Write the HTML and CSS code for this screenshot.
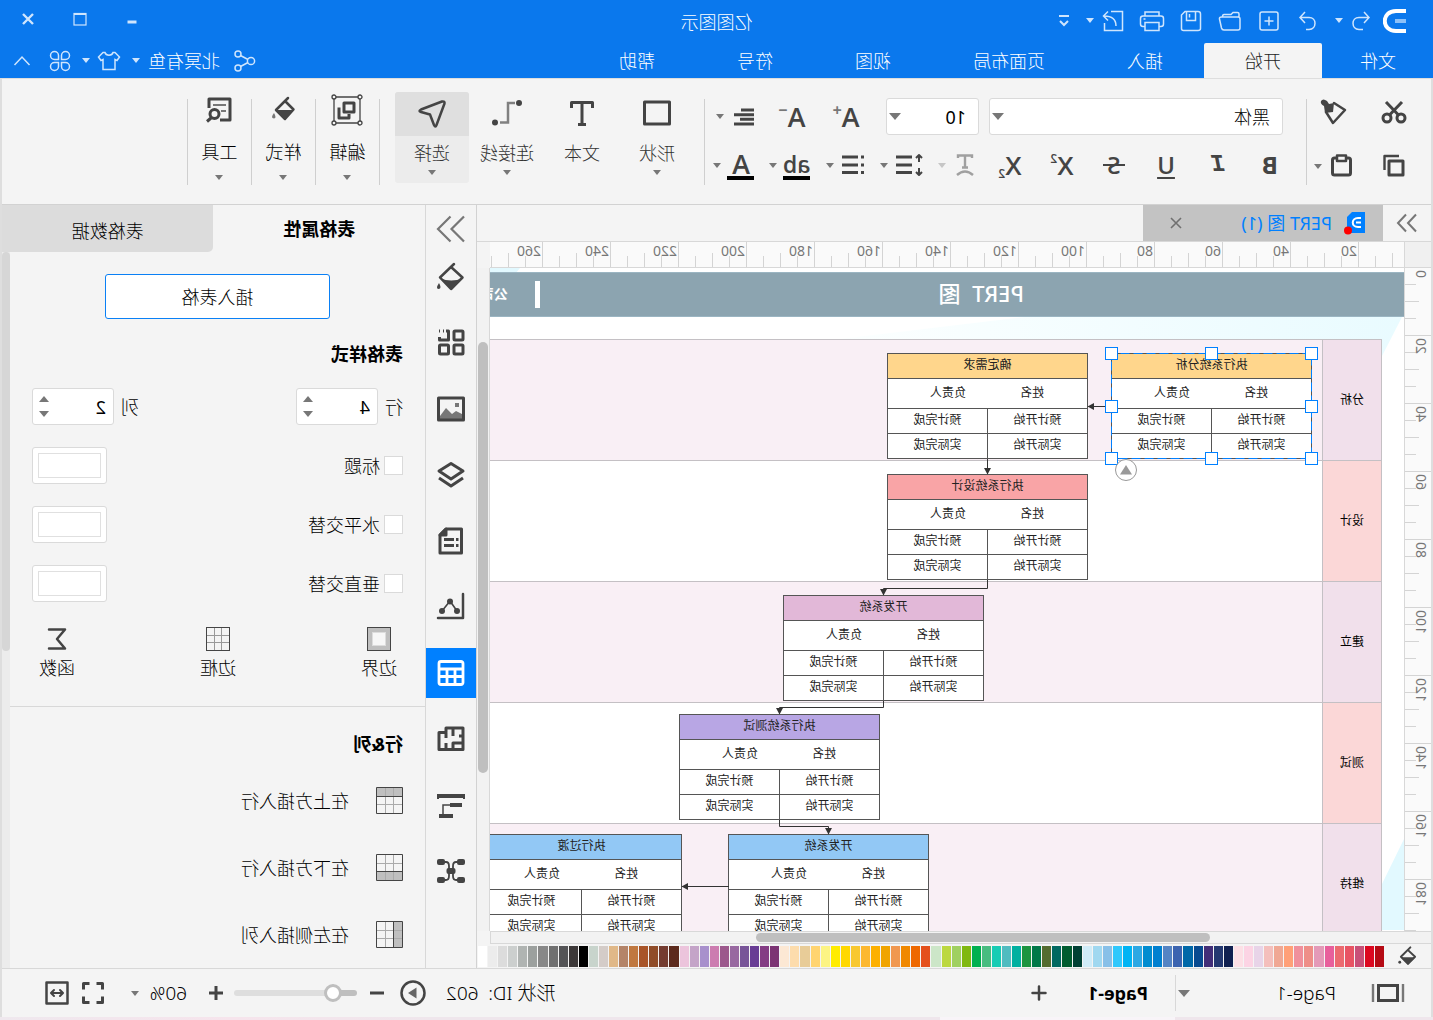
FILE: index.html
```html
<!DOCTYPE html>
<html lang="zh-CN">
<head>
<meta charset="utf-8">
<title>亿图图示</title>
<link rel="stylesheet" href="styles.css">
</head>
<body>
<div class="app">
  <header class="top">
    <div class="titlebar">
      <svg class="logo" width="24" height="26" viewBox="0 0 24 26" fill="none"><path d="M1 3H11C26 3 26 23 11 23H1" stroke="#fff" stroke-width="4"/><path d="M1 13H12" stroke="#8dc1f8" stroke-width="4"/></svg>
      <div class="quick">
        <button class="q q-undo" aria-label="撤销"><svg width="20" height="22" viewBox="0 0 20 22"><path d="M7 2 2 7.500 7 13M2 7.500H12C20 7.500 20 19 12 19.500H8"/></svg></button>
        <i class="caret light"></i>
        <button class="q q-redo" aria-label="重做"><svg width="20" height="22" viewBox="0 0 20 22"><path d="M13 2 18 7.500 13 13M18 7.500H9C1 7.500 1 19 9 19.500H12"/></svg></button>
        <button class="q" aria-label="新建"><svg width="22" height="22" viewBox="0 0 22 22"><rect x="2" y="2" width="18" height="18" rx="2"/><path d="M11 6.500V15.500M6.500 11H15.500"/></svg></button>
        <button class="q" aria-label="打开"><svg width="24" height="22" viewBox="0 0 24 22"><path d="M3 7V4Q3 2.500 4.500 2.500H9L11 4.500H18Q19.500 4.500 19.500 7M2 18V9Q2 7 4 7H20.500Q23 7 22.500 9L20.500 18Q20 20 18 20H4Q2 20 2 18Z"/></svg></button>
        <button class="q" aria-label="保存"><svg width="22" height="22" viewBox="0 0 22 22"><path d="M4 1.500H17L20.500 5V18.500Q20.500 20.500 18.500 20.500H4Q1.500 20.500 1.500 18.500V4Q1.500 1.500 4 1.500ZM6.500 2V10.500H15.500V2M12.500 4V7.500"/></svg></button>
        <button class="q" aria-label="打印"><svg width="26" height="22" viewBox="0 0 26 22"><path d="M6 6V2H20V6M6 16.500H4Q1.500 16.500 1.500 14V8.500Q1.500 6 4 6H22Q24.500 6 24.500 8.500V14Q24.500 16.500 22 16.500H20M6 12.500H20V20.500H6ZM19.500 9H21.500"/></svg></button>
        <button class="q" aria-label="导出"><svg width="24" height="22" viewBox="0 0 24 22"><path d="M14 1.500H2.500V20.500H20.500V13M9 16C9 9 13 6 21 6M17 1.500 21.500 6 17 10.500"/></svg></button>
        <i class="caret light"></i>
        <button class="q q-more" aria-label="更多"><svg width="14" height="14" viewBox="0 0 14 14"><path d="M2 2H12M3 7 7 11 11 7" stroke-width="2"/></svg></button>
      </div>
      <h1 class="title">亿图图示</h1>
      <div class="win">
        <button aria-label="最小化"><svg width="14" height="14" viewBox="0 0 14 14"><path d="M2.500 10H11.500" stroke-width="3"/></svg></button>
        <button aria-label="最大化"><svg width="14" height="14" viewBox="0 0 14 14"><rect x="1" y="1.500" width="12" height="11.500" stroke-width="1.200"/><path d="M1 2H13" stroke-width="2"/></svg></button>
        <button aria-label="关闭"><svg width="14" height="14" viewBox="0 0 14 14"><path d="M2 2 12 12M12 2 2 12" stroke-width="2.400"/></svg></button>
      </div>
    </div>
    <div class="menubar">
      <nav class="tabs">
        <a href="#file" class="first">文件</a><a href="#home" class="on">开始</a><a href="#insert">插入</a><a href="#layout">页面布局</a><a href="#view">视图</a><a href="#symbol">符号</a><a href="#help">帮助</a>
      </nav>
      <div class="user">
        <svg width="24" height="22" viewBox="0 0 24 22"><circle cx="5" cy="11" r="3.600"/><circle cx="18" cy="4" r="3"/><circle cx="18" cy="18" r="3"/><path d="M8 9.500 15.500 5.500M8 12.500 15.500 16.500"/></svg>
        <a href="#me">北冥有鱼</a>
        <i class="caret light"></i>
        <svg width="24" height="22" viewBox="0 0 24 22"><path d="M8 2.500C9 6 15 6 16 2.500H18L22.500 7 20 10.500 18 9.500V19.500H6V9.500L4 10.500 1.500 7 6 2.500Z"/></svg>
        <i class="caret light"></i>
        <svg class="clover" width="22" height="22" viewBox="0 0 22 22"><path d="M9.500 9.500H5.500A4 4 0 1 1 9.500 5.500ZM12.500 9.500V5.500A4 4 0 1 1 16.500 9.500ZM9.500 12.500V16.500A4 4 0 1 1 5.500 12.500ZM12.500 12.500H16.500A4 4 0 1 1 12.500 16.500Z"/></svg>
        <svg class="fold" width="18" height="12" viewBox="0 0 18 12"><path d="M1.500 10 9 2 16.500 10"/></svg>
      </div>
    </div>
  </header>

  <div class="frame">
  <section class="ribbon">
    <div class="clip">
      <button aria-label="剪切"><svg width="26" height="26" viewBox="0 0 26 26" class="s3"><circle cx="6" cy="19" r="4"/><circle cx="20" cy="19" r="4"/><path d="M8.500 16 21 3M17.500 16 5 3"/></svg></button>
      <button class="wide" aria-label="格式刷"><svg width="28" height="28" viewBox="0 0 28 28"><path d="M14 5 3 12 15 25 22 14" class="s2"/><path d="M21 3Q25 0 27 3 28 6 24 8L23 15 15 14 14 5 19 6Z" fill="#444"/></svg></button>
      <button aria-label="复制"><svg width="26" height="26" viewBox="0 0 26 26" class="s3"><rect x="4" y="8" width="14" height="14"/><path d="M8 3H22.500V17" stroke-width="2.400"/></svg></button>
      <button class="wide drop" aria-label="粘贴"><svg width="26" height="26" viewBox="0 0 26 26" class="s3"><rect x="3.500" y="5" width="18" height="17" rx="2"/><path d="M8 2.500H17V8H8Z" fill="#f4f4f4" stroke-width="2.500"/></svg><i class="caret"></i></button>
    </div>
    <i class="sep"></i>
    <div class="font">
      <div class="frow">
        <div class="sel family"><select aria-label="字体"><option>黑体</option></select><i class="caret big"></i></div>
        <div class="sel size"><select aria-label="字号"><option>10</option></select><i class="caret big"></i></div>
        <div class="after">
          <button class="grow">A<sup>+</sup></button>
          <button class="grow">A<sup>−</sup></button>
          <button class="drop" aria-label="对齐"><svg width="24" height="24" viewBox="0 0 24 24" class="s3"><path d="M2 5H15M2 9.700H22M2 14.300H16M2 19H22"/></svg><i class="caret"></i></button>
        </div>
      </div>
      <div class="frow second">
        <div class="marks">
          <button class="g">B</button><button class="g it">I</button><button class="g un">U</button><button class="g st">S</button><button class="g x">X<sup>2</sup></button><button class="g x">X<sub>2</sub></button>
        </div>
        <div class="drops">
          <button class="drop dim" aria-label="文字弧形"><svg width="26" height="26" viewBox="0 0 26 26" stroke="#8c8c8c" fill="none" stroke-width="2.400"><path d="M6 6V3.500H20V6M13 3.500V15M10 15.500H16M5 23Q13 16 21 23"/></svg><i class="caret"></i></button>
          <button class="drop" aria-label="行距"><svg width="30" height="26" viewBox="0 0 30 26" class="s3"><path d="M12 5H28M12 13H28M12 20.500H28"/><path d="M5 3V10M5 16V23M2 6 5 3 8 6M2 20 5 23 8 20" style="stroke-width:2"/></svg><i class="caret"></i></button>
          <button class="drop" aria-label="列表"><svg width="26" height="26" viewBox="0 0 26 26" class="s3"><path d="M8 5H24M8 13H24M8 20.500H24M2 5H5M2 13H5M2 20.500H5"/></svg><i class="caret"></i></button>
          <button class="drop"><span class="under">ab</span><i class="caret"></i></button>
          <button class="drop"><span class="under a">A</span><i class="caret"></i></button>
        </div>
      </div>
    </div>
    <i class="sep"></i>
    <div class="tools">
      <button class="tool"><span class="ic"><svg width="30" height="30" viewBox="0 0 30 30" class="s3"><rect x="2.500" y="3" width="25" height="22"/></svg></span><span>形状</span><i class="caret"></i></button>
      <button class="tool"><span class="ic"><svg width="28" height="30" viewBox="0 0 28 30" class="s3"><path d="M3.500 9V3.500H24.500V9M14 3.500V25M10 25.500H18"/></svg></span><span>文本</span></button>
      <button class="tool"><span class="ic"><svg width="32" height="30" viewBox="0 0 32 30" fill="none"><path d="M8 4H15V23.500H23" stroke="#808080" stroke-width="2.500"/><circle cx="4" cy="4" r="3" fill="#444"/><circle cx="28" cy="23.500" r="3" fill="#444"/></svg></span><span>连接线</span><i class="caret"></i></button>
      <button class="tool on"><span class="ic"><svg width="30" height="30" viewBox="0 0 30 30" class="s2"><path d="M2.500 4.500Q2 2 5 2.500L26 10.500Q29 12 26 13L17 15.500 13 26Q11.500 29 10.500 26Z"/></svg></span><span>选择</span><i class="caret"></i></button>
    </div>
    <i class="sep gap"></i>
    <button class="mini"><svg width="32" height="32" viewBox="0 0 32 32" class="s3"><rect x="3" y="3" width="26" height="26" style="stroke-width:1.300"/><g style="stroke-width:1.300;fill:#f4f4f4"><circle cx="3" cy="3" r="2"/><circle cx="29" cy="3" r="2"/><circle cx="3" cy="29" r="2"/><circle cx="29" cy="29" r="2"/></g><rect x="9" y="9" width="10" height="9"/><path d="M24 13.500V24H14V20"/></svg><span>编辑</span><i class="caret"></i></button>
    <i class="sep"></i>
    <button class="mini"><svg width="32" height="32" viewBox="0 0 32 32"><path d="M11 4 23 16 14 25 5.500 15.500 14 7" class="s2"/><path d="M5.500 16H23L14 25.500Z" fill="#444"/><path d="M25 19Q29 24 25 24.500 22 24 25 19Z" fill="#777"/></svg><span>样式</span><i class="caret"></i></button>
    <i class="sep"></i>
    <button class="mini"><svg width="32" height="32" viewBox="0 0 32 32" class="s3"><path d="M15 26H5V5H26V14"/><path d="M9 11H22M9 17H14" style="stroke:#777;stroke-width:2"/><circle cx="20.500" cy="20" r="4.500"/><path d="M24 24 28 27.500"/></svg><span>工具</span><i class="caret"></i></button>
    <i class="sep"></i>
  </section>

  <main class="work">
    <section class="doc">
      <div class="doctabs">
        <svg width="48" height="36" viewBox="0 0 48 36" fill="none" stroke="#777" stroke-width="2"><path d="M15 9.500 23 18 15 26.500M25 9.500 33 18 25 26.500"/></svg>
        <div class="doctab"><svg width="24" height="24" viewBox="0 0 24 24"><path d="M2 1H15L20 6V22H2Z" fill="#0080ff"/><path d="M6 7H9C16 7 16 16 9 16H6M6 11.500H11" fill="none" stroke="#fff" stroke-width="2"/><circle cx="19" cy="19.500" r="4" fill="#f00"/></svg><a href="#doc">PERT 图 (1)</a><button aria-label="关闭标签"><svg width="12" height="12" viewBox="0 0 12 12" stroke="#707070" stroke-width="1.600"><path d="M1 1 11 11M11 1 1 11"/></svg></button></div>
      </div>
      <div class="sheet">
        <div class="corner"></div>
        <div class="hruler" id="hruler"></div>
        <div class="vruler" id="vruler"></div>
        <div class="canvas">
          <svg class="deco" width="914" height="662" viewBox="0 0 914 662"><defs><linearGradient id="fade"><stop offset="0" stop-color="#e9fbff"/><stop offset="1" stop-color="#fcffff"/></linearGradient></defs><path d="M2 49H380L564 71H22V88Z" fill="url(#fade)"/><path d="M884 0H914V6H889ZM0 571 22 616V662H0Z" fill="#e2f9ff"/></svg>
          <div class="banner"><h2>PERT&nbsp; 图</h2><i></i><b>公司名称</b></div>
          <div class="lanes">
            <div class="lane"><b>分析</b></div><div class="lane"><b>设计</b></div><div class="lane"><b>建立</b></div><div class="lane"><b>测试</b></div><div class="lane"><b>维持</b></div>
          </div>
          <div class="cards" id="cards"></div>
          <svg class="links" width="914" height="662" viewBox="0 0 914 662" fill="none" stroke="#333">
            <defs><marker id="arr" markerWidth="8" markerHeight="8" refX="6" refY="3.500" orient="auto" markerUnits="userSpaceOnUse"><path d="M0 0 6.500 3.500 0 7Z" fill="#333" stroke="none"/></marker></defs>
            <g marker-end="url(#arr)"><path d="M293 138.500H316"/><path d="M416.500 191V206"/><path d="M416.500 312V320.500H520.500V327"/><path d="M520.500 433V439.500H624.500V446"/><path d="M624.500 552V558.500H575.500V566"/><path d="M675 618.500H722"/></g>
            <rect x="92.500" y="85.500" width="200" height="105" stroke="#0080ff" stroke-dasharray="9 4"/>
            <g fill="#fff" stroke="#0080ff"><rect x="86.500" y="79.500" width="12" height="12"/><rect x="186.500" y="79.500" width="12" height="12"/><rect x="286.500" y="79.500" width="12" height="12"/><rect x="86.500" y="132.500" width="12" height="12"/><rect x="286.500" y="132.500" width="12" height="12"/><rect x="86.500" y="184.500" width="12" height="12"/><rect x="186.500" y="184.500" width="12" height="12"/><rect x="286.500" y="184.500" width="12" height="12"/></g>
            <circle cx="278" cy="202" r="10.500" stroke="#999" fill="#fff"/><path d="M272 206.500H284L278 197Z" fill="#999" stroke="none"/>
          </svg>
        </div>
        <div class="vbar"><i></i></div>
        <div class="hbar"><i></i></div>
      </div>
      <div class="palette">
        <svg width="24" height="22" viewBox="0 0 28 28"><path d="M11 3 23 15 14 24 5 15 14 6.500" class="s2"/><path d="M5 15.500H23L14 25Z" fill="#444"/><circle cx="24.500" cy="22" r="1.800" fill="#444"/></svg>
        <div id="swatches" class="swatches"></div>
      </div>
    </section>

    <nav class="rail">
      <button class="head" aria-label="折叠"><svg width="30" height="28" viewBox="0 0 30 28" fill="none" stroke="#777" stroke-width="2.200"><path d="M2 1.500 14.500 14 2 26.500M15.500 1.500 28 14 15.500 26.500"/></svg></button>
      <button aria-label="填充"><svg width="30" height="30" viewBox="0 0 30 30"><path d="M12 2 26 15.500 15 27 3.500 15.500 15 5" class="s2"/><path d="M3 16Q15 21 26 16L14.500 28Z" fill="#444"/><path d="M27 21Q31 27 27 27 24 26 27 21Z" fill="#444"/></svg></button>
      <button aria-label="符号"><svg width="30" height="30" viewBox="0 0 30 30" class="s3"><rect x="3" y="3" width="9" height="9" rx="1"/><path d="M20 3H17.500V12H26.500V9M22 3H23M26 3H27"/><rect x="3" y="17" width="9" height="9" rx="1"/><rect x="17.500" y="17" width="9" height="9" rx="1"/></svg></button>
      <button aria-label="图片"><svg width="30" height="30" viewBox="0 0 30 30"><path d="M4 24V20L10 17 14 20 20 14 26 22V25H4Z" fill="#777"/><rect x="7" y="9" width="4" height="4" fill="#777"/><rect x="2.500" y="4" width="25" height="22" class="s3"/></svg></button>
      <button aria-label="图层"><svg width="30" height="30" viewBox="0 0 30 30" class="s3"><path d="M15 3.500 27 11 15 19 3 11ZM3 18 15 26 27 18"/></svg></button>
      <button aria-label="文档"><svg width="30" height="30" viewBox="0 0 30 30" class="s3"><path d="M4.500 3H20L26 9V27H4.500Z"/><path d="M20 3V9H26Z" fill="#444"/><path d="M12 13.500H22M12 19.500H22M7.500 13.500H10M7.500 19.500H10"/></svg></button>
      <button aria-label="图表"><svg width="30" height="30" viewBox="0 0 30 30" class="s2"><path d="M3 2V26H28"/><path d="M9 19 16 9 24 19" style="stroke-width:1.600"/><g fill="#444" stroke="none"><circle cx="9" cy="19" r="3"/><circle cx="16" cy="9.500" r="3"/><circle cx="24" cy="19" r="3"/></g></svg></button>
      <button class="on" aria-label="表格"><svg width="30" height="30" viewBox="0 0 30 30" fill="none" stroke="#fff" stroke-width="2.800"><rect x="3" y="3.500" width="24" height="23" rx="2"/><path d="M3 11H27M3 18.500H27M11 11V26M19 11V26"/></svg></button>
      <button aria-label="平面图"><svg width="30" height="30" viewBox="0 0 30 30" class="s3"><path d="M3 4H20V8.500H27V25.500H3ZM13 4V12M3 12H7M3 19H13V25M20 9V14M20 25V19"/></svg></button>
      <button aria-label="甘特图"><svg width="30" height="30" viewBox="0 0 30 30" fill="#444"><path d="M1 4H29V9H27V8H3V9H1ZM4 13H16V17H4ZM13 24H27V28H13Z"/><path d="M16 15H23V24" fill="none" stroke="#444" stroke-width="1.500"/></svg></button>
      <button aria-label="思维导图"><svg width="30" height="30" viewBox="0 0 30 30" fill="#444"><rect x="1" y="3" width="8" height="6" rx="2"/><rect x="21" y="3" width="8" height="6" rx="2"/><rect x="1" y="21" width="8" height="6" rx="2"/><rect x="21" y="21" width="8" height="6" rx="2"/><rect x="10.500" y="12" width="9" height="6" rx="2"/><path d="M9 6H10Q13 6 13 10V20Q13 24 10 24H9M21 6H20Q17 6 17 10V20Q17 24 20 24H21" fill="none" stroke="#444" stroke-width="1.800"/></svg></button>
    </nav>

    <aside class="panel">
      <div class="ptabs"><button class="on">表格属性</button><button>表格数据</button></div>
      <div class="pbody">
        <div class="props">
          <button class="insert">插入表格</button>
          <h3>表格样式</h3>
          <div class="line">
            <label for="rows">行</label><div class="spin"><input id="rows" value="4"><span><i class="caret up"></i><i class="caret dn"></i></span></div>
            <label for="cols" class="push">列</label><div class="spin"><input id="cols" value="2"><span><i class="caret up"></i><i class="caret dn"></i></span></div>
          </div>
          <div class="line"><label class="tick"><input type="checkbox">标题</label><button class="color push" aria-label="标题颜色"><i></i></button></div>
          <div class="line"><label class="tick"><input type="checkbox">水平交替</label><button class="color push" aria-label="水平交替颜色"><i></i></button></div>
          <div class="line"><label class="tick"><input type="checkbox">垂直交替</label><button class="color push" aria-label="垂直交替颜色"><i></i></button></div>
          <div class="trio">
            <button><svg width="24" height="24" viewBox="0 0 24 24"><rect x=".5" y=".5" width="23" height="23" fill="#bfbfbf" stroke="#444"/><rect x="5.500" y="5.500" width="13" height="13" fill="#f7f7f7" stroke="#ddd"/></svg>边界</button>
            <button><svg width="24" height="24" viewBox="0 0 24 24" fill="none"><path d="M8.500 1V23M15.500 1V23M1 8.500H23M1 15.500H23" stroke="#999"/><rect x=".5" y=".5" width="23" height="23" stroke="#444"/></svg>边框</button>
            <button><svg width="24" height="24" viewBox="0 0 24 24" class="s2"><path d="M20 2.500H4L12 12 4 21.500H20"/></svg>函数</button>
          </div>
        </div>
        <div class="rc">
          <h3>行&amp;列</h3>
          <button class="act"><svg width="27" height="27" viewBox="0 0 27 27" fill="none"><path d="M1 1H26V9H1Z" fill="#bfbfbf"/><path d="M9.500 1V26M17.500 1V26M1 17.500H26" stroke="#aaa"/><path d="M.5 .5H26.500V26.500H.5ZM1 9.500H26" stroke="#444"/></svg>在上方插入行</button>
          <button class="act"><svg width="27" height="27" viewBox="0 0 27 27" fill="none"><path d="M1 18H26V26H1Z" fill="#bfbfbf"/><path d="M9.500 1V26M17.500 1V26M1 9.500H26" stroke="#aaa"/><path d="M.5 .5H26.500V26.500H.5ZM1 17.500H26" stroke="#444"/></svg>在下方插入行</button>
          <button class="act"><svg width="27" height="27" viewBox="0 0 27 27" fill="none"><path d="M1 1H9V26H1Z" fill="#bfbfbf"/><path d="M17.500 1V26M1 9.500H26M1 17.500H26" stroke="#aaa"/><path d="M.5 .5H26.500V26.500H.5ZM9.500 1V26" stroke="#444"/></svg>在左侧插入列</button>
        </div>
        <div class="pbar"><i></i></div>
      </div>
    </aside>
  </main>

  <footer class="status">
    <div class="pages">
      <svg width="34" height="20" viewBox="0 0 34 20" fill="none" stroke="#444" stroke-width="3"><rect x="7.500" y="2.500" width="19" height="15"/><path d="M2 1V19M32 1V19" stroke="#777" stroke-width="2.400"/></svg>
      <span class="cur">Page-1</span><i class="caret big"></i><i class="vsep"></i><a href="#p1">Page-1</a>
      <button aria-label="新建页"><svg width="16" height="16" viewBox="0 0 16 16" class="s2"><path d="M8 1.500V14.500M1.500 8H14.500"/></svg></button>
    </div>
    <div class="zoom">
      <span class="sid">形状 ID: &nbsp;602</span>
      <button aria-label="演示"><svg width="26" height="26" viewBox="0 0 26 26"><circle cx="13" cy="13" r="11.500" class="s2"/><path d="M9.500 7.500 18 13 9.500 18.500Z" fill="#666"/></svg></button>
      <button aria-label="缩小"><svg width="16" height="16" viewBox="0 0 16 16" class="s3"><path d="M1 8H15"/></svg></button>
      <input type="range" aria-label="缩放" min="0" max="100" value="14">
      <button aria-label="放大"><svg width="16" height="16" viewBox="0 0 16 16" class="s3"><path d="M8 1V15M1 8H15"/></svg></button>
      <span class="pct">60%</span><i class="caret"></i>
      <button class="full" aria-label="全屏"><svg width="24" height="24" viewBox="0 0 24 24" class="s3"><path d="M2.500 8.500V2.500H8.500M15.500 2.500H21.500V8.500M21.500 15.500V21.500H15.500M8.500 21.500H2.500V15.500"/></svg></button>
      <button aria-label="适应宽度"><svg width="24" height="24" viewBox="0 0 24 24" class="s2"><rect x="1.500" y="1.500" width="21" height="21"/><path d="M7 12H17M9 9 6 12 9 15M15 9 18 12 15 15" style="stroke-width:2"/></svg></button>
    </div>
  </footer>
  </div>
  <div class="desk"></div>
</div>
<script src="script.js"></script>
</body>
</html>
```
FILE: styles.css
```css
* { box-sizing: border-box; }
html, body { margin: 0; height: 100%; }
body {
  font-family: "Noto Sans", "Noto Sans CJK SC", sans-serif;
  font-size: 18px;
  font-weight: 300;
  line-height: 24px;
  color: #000;
  overflow: hidden;
}
button, input, select { font: inherit; color: inherit; margin: 0; }
button { background: none; border: 0; padding: 0; display: flex; align-items: center; justify-content: center; }
a { color: inherit; text-decoration: none; white-space: nowrap; }
h1, h2, h3 { margin: 0; font: inherit; }
svg { display: block; flex: none; }
i { font-style: normal; flex: none; }

/* the whole window is shown flipped left to right */
.app { height: 100%; display: flex; flex-direction: column; transform: scaleX(-1); background: #f4f4f4; }

.s2 { fill: none; stroke: #444; stroke-width: 2.500; stroke-linejoin: round; stroke-linecap: round; }
.s3 { fill: none; stroke: #444; stroke-width: 3; stroke-linejoin: round; }
.caret { width: 0; height: 0; border: 4px solid transparent; border-top: 5px solid #777; border-bottom: 0; }
.caret.light { border-top-color: #cfe5fd; }
.caret.big { border-width: 6px; border-top-width: 7px; border-bottom: 0; }
.caret.up { border-width: 5px; border-top: 0; border-bottom: 6px solid #777; }
.caret.dn { border-width: 5px; border-top-width: 6px; border-bottom: 0; }

/* title bar */
.top { background: #0a78ed; color: #fff; }
.top svg { fill: none; stroke: #cfe5fd; stroke-width: 1.500; }
.top .logo { stroke: none; }
.titlebar { display: flex; align-items: center; height: 43px; padding: 0 21px 2px 26px; position: relative; }
.quick { display: flex; align-items: center; margin-left: 9px; }
.q { width: 39px; }
.q-undo { width: 26px; margin-right: 5px; }
.q-redo { width: 38px; margin-left: 8px; }
.q-more { width: 26px; margin-left: 9px; }
.title { position: absolute; left: 0; right: 0; top: 10px; text-align: center; pointer-events: none; }
.win { margin-left: auto; display: flex; gap: 38px; margin-bottom: 4px; }
.menubar { display: flex; justify-content: space-between; height: 35px; padding-right: 13px; }
.tabs { display: flex; }
.tabs a { padding: 6px 41px; }
.tabs .first { padding: 6px 38px 6px 37px; }
.tabs .on { background: #f4f4f4; color: #222; border-radius: 2px 2px 0 0; }
.user { display: flex; align-items: center; }
.user a { margin: 0 7px 0 12px; }
.user a + .caret { margin: 0 11px 0 1px; }
.user svg + .caret { margin: 0 11px 0 7px; }
.fold { margin-left: 18px; }

.frame { flex: 1; min-height: 0; display: flex; flex-direction: column; border: 2px solid #dedede; border-width: 1px 2px 0; }

/* ribbon */
.ribbon { display: flex; height: 126px; border-bottom: 1px solid #d2d2d2; }
.sep { width: 1px; height: 86px; background: #cfcfcf; margin-top: 20px; }
.sep.gap { margin-left: 15px; }
.clip { width: 124px; padding: 19px 4px 0 17px; display: grid; grid-template-columns: 40px 46px; grid-auto-rows: 28px; column-gap: 17px; row-gap: 26px; align-content: start; }
.drop { gap: 6px; }
.font { width: 601px; padding: 19px 0 0 23px; }
.frow { display: flex; height: 37px; }
.frow.second { height: 30px; margin-top: 15px; }
.sel { position: relative; margin-right: 10px; }
.sel select { appearance: none; width: 100%; height: 37px; border: 1px solid #dadada; border-radius: 3px; background: #fff; padding: 0 12px; }
.sel .caret { position: absolute; right: 3px; top: 15px; }
.family { width: 294px; }
.size { width: 93px; margin-right: 13px; }
.size select, .spin input { font-weight: 400; }
.after { display: flex; }
.grow { width: 54px; font: 600 27px/30px "Open Sans", sans-serif; color: #444; }
.grow sup { font-size: 16px; font-weight: 700; line-height: 16px; align-self: flex-start; margin-top: 4px; color: #777; }
.after .drop { margin-left: 5px; width: 48px; gap: 8px; }
.marks { display: flex; gap: 26px; }
.g { width: 26px; font: 700 24px/30px "Open Sans", sans-serif; color: #444; }
.it { font-family: "Liberation Mono", monospace; font-style: italic; }
.un { text-decoration: underline; font-weight: 600; text-underline-offset: 3px; }
.st { font-weight: 600; background: linear-gradient(#444, #444) center / 22px 2px no-repeat; }
.x sup, .x sub { font-size: 12px; line-height: 12px; }
.x { font-size: 26px; font-weight: 600; }
.x sup { align-self: flex-start; margin-top: 3px; }
.x sub { align-self: flex-end; }
.drops { display: flex; gap: 14px; margin-left: 18px; }
.drops .drop { width: 42px; }
.dim { opacity: .8; }
.dim .caret { border-top-color: #bbb; }
.under { width: 27px; height: 28px; border-bottom: 4px solid #000; font: 600 23px/24px "Open Sans", sans-serif; color: #444; text-align: center; margin-top: 2px; }
.under.a { font-size: 27px; }
.tools { display: flex; gap: 1px; margin: 13px 0 0 10px; }
.tool { width: 74px; height: 91px; flex-direction: column; justify-content: flex-start; border-radius: 3px; color: #333; }
.tool .ic { width: 100%; height: 44px; display: flex; align-items: center; justify-content: center; margin-bottom: 5px; }
.tool .caret { margin-top: 5px; }
.tool.on { background: #ececec; }
.tool.on .ic { background: #dfdfdf; border-radius: 3px 3px 0 0; }
.mini { width: 63px; flex-direction: column; justify-content: flex-start; padding-top: 15px; }
.mini span { margin-top: 14px; }
.mini .caret { margin-top: 11px; }

/* working area */
.work { flex: 1; min-height: 0; display: flex; }
.doc { flex: 1; min-width: 0; display: flex; flex-direction: column; }
.doctabs { display: flex; height: 36px; }
.doctab { width: 240px; background: #c3c3c3; display: flex; align-items: center; padding: 0 27px 0 16px; color: #0080ff; font-weight: 400; }
.doctab a { margin: 0 auto 0 11px; }
.sheet { flex: 1; min-height: 0; display: grid; grid-template: 26px minmax(0, 1fr) 13px / 27px minmax(0, 1fr) 13px; border-top: 1px solid #d8d8d8; }
.corner { background: #f0f0f0; border: 1px solid #d8d8d8; border-width: 0 1px 1px 0; }
.hruler, .vruler { background-color: #fafafa; background-repeat: repeat-x; color: #777; font-size: 14px; line-height: 16px; overflow: hidden; font-weight: 400; }
.hruler {
  grid-area: 1 / 2; border-bottom: 1px solid #d8d8d8; padding-left: 45px; display: flex;
  background-image: linear-gradient(90deg, #d4d4d4 1px, transparent 1px), linear-gradient(90deg, #d4d4d4 1px, transparent 1px), linear-gradient(90deg, #d4d4d4 1px, transparent 1px);
  background-size: 68px 26px, 34px 14px, 17px 11px;
  background-position: 45px 100%, 11px 100%, 11px 100%;
}
.hruler span { width: 68px; flex: none; padding: 1px 0 0 2px; }
.vruler {
  grid-area: 2 / 1; border-right: 1px solid #d8d8d8; padding: 0 8px 0 2px; background-repeat: repeat-y;
  background-image: linear-gradient(#d4d4d4 1px, transparent 1px), linear-gradient(#d4d4d4 1px, transparent 1px), linear-gradient(#d4d4d4 1px, transparent 1px);
  background-size: 26px 68px, 14px 34px, 11px 17px;
  background-position: 100% 67px, 100% 33px, 100% 16px;
}
.vruler span { display: block; width: 16px; height: 68px; writing-mode: vertical-rl; transform: rotate(180deg); text-align: right; padding-bottom: 2px; }
.canvas { grid-area: 2 / 2; position: relative; overflow: hidden; background: #fff; }
.canvas::before { content: ""; display: table; }
.deco, .links { position: absolute; left: 0; top: 0; }
.banner { position: relative; margin-top: 4px; height: 45px; background: #8ca4b0; border: 1px solid #9bb5c2; border-width: 1px 0; color: #fff; display: flex; white-space: nowrap; }
.banner h2 { font-size: 22px; font-weight: 500; line-height: 40px; width: 484px; margin-left: 380px; flex: none; }
.banner i { width: 5px; height: 27px; background: #fff; margin-top: 8px; }
.banner b { font-size: 14px; font-weight: 700; line-height: 42px; margin-left: 27px; }
.lanes { position: relative; margin: 22px 0 0 22px; }
.lane { height: 121px; border-top: 1px solid #c4c0c4; background: #f9eff5; }
.lane b { display: flex; align-items: center; justify-content: center; width: 60px; height: 120px; background: #f1e0eb; border: 1px solid #c4c0c4; border-width: 0 1px; font-size: 12px; font-weight: 400; }
.lane:nth-child(even) { background: #fff; }
.lane:nth-child(even) b { background: #fbd7d7; }
.card { position: absolute; width: 201px; table-layout: fixed; border-collapse: collapse; background: #fff; font-size: 12px; line-height: 16px; font-weight: 400; color: #222; }
.card th, .card td { border: 1px solid #555; padding: 0 0 2px; height: 25px; text-align: center; font-weight: 400; }
.card .who { height: 30px; }
.who div { display: flex; gap: 54px; padding-left: 43px; }
.vbar { background: #f2f2f2; border-left: 1px solid #d8d8d8; padding: 74px 1px 0; grid-area: 2 / 3; }
.vbar i { display: block; width: 10px; height: 431px; border-radius: 5px; background: #bfbfbf; }
.hbar { grid-area: 3 / 1 / 4 / 3; background: #f2f2f2; border: 1px solid #d8d8d8; border-left: 0; padding: 1px 0 0 221px; }
.hbar i { display: block; width: 454px; height: 9px; border-radius: 5px; background: #bfbfbf; }
.palette { height: 24px; display: flex; align-items: center; padding: 0 1px 0 11px; }
.swatches { flex: 1; display: flex; gap: 1px; height: 21px; margin-left: 12px; }
.swatches button { flex: 1 1 0; height: 21px; }

/* icon rail */
.rail { width: 51px; border-left: 1px solid #d2d2d2; display: flex; flex-direction: column; gap: 16px; }
.rail button { height: 50px; }
.rail .head { height: 47px; margin-bottom: -16px; }
.rail .on { background: #0080ff; }

/* table panel */
.panel { width: 424px; border-left: 1px solid #d8d8d8; display: flex; flex-direction: column; }
.ptabs { display: flex; height: 47px; }
.ptabs button { flex: 1; background: #dcdcdc; border-bottom-left-radius: 5px; padding-top: 4px; }
.ptabs .on { background: none; font-weight: 700; padding: 0; }
.pbody { flex: 1; min-height: 0; display: grid; grid-template: auto 1fr / minmax(0, 1fr) 8px; overflow: hidden; }
.pbar { grid-area: 1 / 2 / 3 / 3; background: #ececec; }
.pbar i { display: block; height: 399px; background: #d6d6d6; border-radius: 4px; }
.props { padding: 22px 22px 26px; border-bottom: 1px solid #d8d8d8; }
.rc { grid-column: 1; padding: 25px 22px 0; }
h3 { font-weight: 700; }
.insert { width: 225px; height: 45px; margin: 0 auto 23px 73px; background: #fff; border: 1px solid #0a80f5; border-radius: 3px; }
.line { display: flex; align-items: center; height: 37px; margin-top: 22px; }
.push { margin-left: auto; }
.spin { display: flex; width: 82px; height: 37px; margin-left: 7px; background: #fff; border: 1px solid #dadada; border-radius: 3px; }
.spin input { width: 64px; border: 0; background: none; padding: 0 0 0 7px; outline: 0; }
.spin span { display: flex; flex-direction: column; justify-content: space-between; padding: 7px 0; }
.tick { display: flex; align-items: center; gap: 4px; }
.tick input { appearance: none; width: 19px; height: 19px; border: 1px solid #dadada; background: #fff; }
.color { width: 75px; height: 37px; background: #fff; border: 1px solid #dadada; border-radius: 3px; }
.color i { width: 63px; height: 25px; border: 1px solid #e0e0e0; }
.trio { display: flex; justify-content: space-between; margin: 25px 7px 0 6px; }
.trio button { flex-direction: column; gap: 5px; }
.act { gap: 27px; height: 27px; margin-top: 40px; }
h3 + .act { margin-top: 31px; }

/* status bar */
.status { height: 49px; border-top: 1px solid #d8d8d8; display: flex; justify-content: space-between; font-size: 19px; }
.pages, .zoom { display: flex; align-items: center; }
.pages { padding-left: 26px; }
.cur { width: 146px; margin-left: 35px; }
.vsep { width: 1px; height: 36px; background: #d8d8d8; margin: 0 27px 0 2px; }
.pages a { font-size: 18px; font-weight: 700; width: 63px; margin-right: 38px; }
.zoom { padding-right: 31px; }
.sid { margin-right: 20px; }
.zoom button { margin-right: 12px; }
.zoom button:nth-of-type(1) { margin-right: 15px; }
.zoom input { appearance: none; width: 123px; height: 6px; margin-right: 10px; border-radius: 3px; background: linear-gradient(90deg, #bfbfbf 18px, #dedede 18px); }
.zoom input::-webkit-slider-thumb { appearance: none; width: 18px; height: 18px; border: 3px solid #bfbfbf; border-radius: 50%; background: #fff; }
.zoom .pct { width: 48px; margin-left: 9px; }
.zoom .full { margin-left: 26px; }
.desk { height: 3px; background: linear-gradient(90deg, #efe6ec 258px, #f8f4f8 258px 493px, #efe6ec 493px 1000px, #f6e4ec 1200px, #efe8ee); }
```
FILE: script.js
```js
const el = (id) => document.getElementById(id);

for (let n = 20; n <= 260; n += 20) el('hruler').innerHTML += `<span>${n}</span>`;
for (let n = 0; n <= 180; n += 20) el('vruler').innerHTML += `<span>${n}</span>`;

const cards = [
  [92, 85, '#ffd68c', '执行系统分析'],
  [316, 85, '#ffd68c', '确定需求'],
  [316, 206, '#f9a4a6', '执行系统设计'],
  [420, 327, '#e2b8d8', '开发系统'],
  [524, 446, '#b8a6e4', '执行系统测试'],
  [475, 566, '#92c8f5', '开发系统'],
  [722, 566, '#92c8f5', '执行过渡'],
];
el('cards').innerHTML = cards.map(([x, y, color, name]) => `
  <table class="card" style="left:${x}px;top:${y}px">
    <tr><th colspan="2" style="background:${color}">${name}</th></tr>
    <tr><td colspan="2" class="who"><div><span>姓名</span><span>负责人</span></div></td></tr>
    <tr><td>预计开始</td><td>预计完成</td></tr>
    <tr><td>实际开始</td><td>实际完成</td></tr>
  </table>`).join('');

const colors = `b50a14 dc0820 c85078 e85464 ec6a70 e8609c e49ab8 ee8e88 f0909c ffa078 f0a894 f4bfbc e8d4e8 fcd4e4 fde0e6
102050 243870 422e78 084a90 0068a8 3c64b0 5484c4 0080d0 008cd0 2ca8e4 00b4f4 30c8fc 88c0e8 a0d8f0 d0ecf8
004034 005c30 006860 546c30 007848 1c9440 00b0a0 50bcc0 18ccb4 48bc80 00b050 80b810 a0d060 bcd840 cce6c8
e4501c ee6800 f08800 f09850 f0a400 fdb000 fcb830 f8c830 ffd800 ffec00 fcf484 ffd470 e8cc98 fddcac fce8d4
7c3474 843c84 683c94 785498 9868a0 9c588c cc7cb0 a890cc c4a4c8 ecc4dc
5c2a1c 743c30 904c28 a85428 c07840 b48468 e0b888 d4ccc8 c8d4cc
000000 3c3838 545456 707070 888888 9ca09e b0b4b2 cccfce dcdcdc ececec ffffff`.split(/\s+/);
el('swatches').innerHTML = colors.map((c) => `<button aria-label="#${c}" style="background:#${c}"></button>`).join('');
```
